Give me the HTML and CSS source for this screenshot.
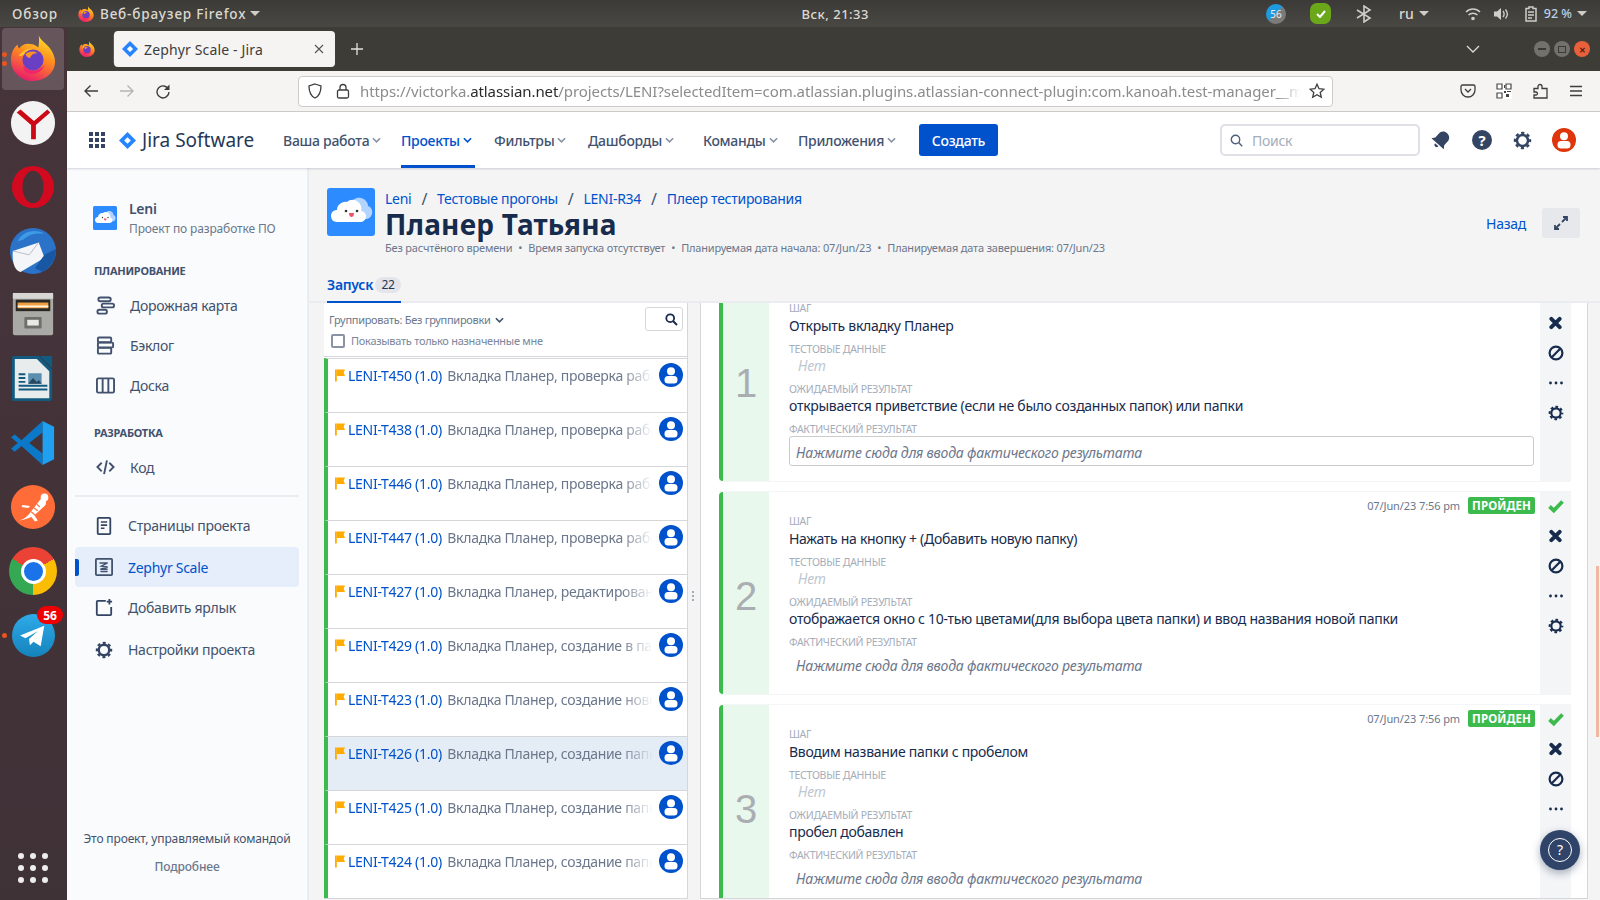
FILE: index.html
```html
<!DOCTYPE html>
<html lang="ru">
<head>
<meta charset="utf-8">
<title>Zephyr Scale - Jira</title>
<link rel="stylesheet" href="styles.css">
</head>
<body>
<svg class="defs" width="0" height="0" aria-hidden="true">
  <defs>
    <linearGradient id="ffgrad" x1="0.7" y1="0" x2="0.3" y2="1"><stop offset="0" stop-color="#ffe226"/><stop offset="0.45" stop-color="#ff8a1f"/><stop offset="1" stop-color="#e8186f"/></linearGradient>
    <linearGradient id="tggrad" x1="0.5" y1="0" x2="0.5" y2="1"><stop offset="0" stop-color="#2eaaea"/><stop offset="1" stop-color="#1583bb"/></linearGradient>
    <symbol id="ff" viewBox="0 0 48 48">
      <path d="M30 0c1 5 7 8 11 13 4 5 6 10 6 15 0 11-10 20-23 20C11 48 1 38 1 26 1 19 4 13 8 10c0 2 .5 3 1.500 4 2-3 6-5 9-5 4 0 8 1 11 4 1-4 1-9 .5-13z" fill="url(#ffgrad)"/>
      <path d="M9 22c3-5 8-8 14-8 -2 2-4 4-5 6-4 1-6 2-9 2z" fill="#ffbf2e"/>
      <circle cx="24" cy="26" r="11" fill="#6a3fc4"/>
      <path d="M16 20c3-3 9-4 13-1 -5 0-7 2-8 5-2 0-4-2-5-4z" fill="#ff9420"/>
      <path d="M14 32c3 4 8 6 13 5 4-1 7-3 9-6-2 8-12 12-19 8-2-1-3-4-3-7z" fill="#f2246e"/>
    </symbol>
    <symbol id="jira" viewBox="0 0 18 18"><polygon points="9,0 18,9 9,18 0,9" fill="#2684ff"/><polygon points="9,5.500 12.500,9 9,12.500 5.500,9" fill="#fff"/></symbol>
    <symbol id="cloud" viewBox="0 0 48 48">
      <rect width="48" height="48" rx="3" fill="#2c8bff"/>
      <path d="M24 16c1-4 5-7 10-6 4 1 7 4 7 8 3 1 5 4 4 8-1 3-3 5-7 5H24z" fill="#b3d4ff"/>
      <path d="M10 34c-4 0-6-3-6-6 0-4 3-6 6-6 0-5 5-9 10-8 3-3 8-3 11 0 3 2 4 6 3 9 3 0 5 3 5 5 0 4-3 6-6 6z" fill="#fff"/>
      <circle cx="19" cy="23" r="1.300" fill="#333"/><circle cx="30" cy="23" r="1.300" fill="#333"/>
      <path d="M22 25h5c0 3-1.500 4-2.500 4s-2.500-1-2.500-4z" fill="#f0506e"/>
    </symbol>
    <symbol id="gear" viewBox="0 0 24 24">
      <circle cx="12" cy="12" r="7" fill="none" stroke="currentColor" stroke-width="3.200"/>
      <circle cx="12" cy="12" r="9.500" fill="none" stroke="currentColor" stroke-width="3" stroke-dasharray="4 3.460" stroke-dashoffset="2"/>
    </symbol>
    <symbol id="person" viewBox="0 0 24 24">
      <circle cx="12" cy="12" r="12" fill="currentColor"/>
      <circle cx="12" cy="8.200" r="4" fill="#fff"/>
      <rect x="5.500" y="13" width="13" height="7.500" rx="3.500" fill="#fff"/>
    </symbol>
    <symbol id="cross" viewBox="0 0 14 14"><path d="M2.500 2.500l9 9m0-9l-9 9" stroke="#172b4d" stroke-width="4.200" stroke-linecap="round" fill="none"/></symbol>
    <symbol id="ban" viewBox="0 0 16 16"><circle cx="8" cy="8" r="6.400" fill="none" stroke="#172b4d" stroke-width="2.200"/><path d="M12.200 3.800l-8.400 8.400" stroke="#172b4d" stroke-width="2.200"/></symbol>
    <symbol id="dots" viewBox="0 0 16 4"><circle cx="2.500" cy="2" r="1.400" fill="#172b4d"/><circle cx="8" cy="2" r="1.400" fill="#172b4d"/><circle cx="13.500" cy="2" r="1.400" fill="#172b4d"/></symbol>
    <symbol id="check" viewBox="0 0 16 14"><path d="M1.500 7.500l4.300 4 8.700-9" stroke="#3dba4e" stroke-width="3.800" fill="none"/></symbol>
    <symbol id="flag" viewBox="0 0 11 13"><path d="M0 0h2v13H0z" fill="#ffab00"/><path d="M2 0h9l-1.500 3.500L11 7H2z" fill="#ffab00"/></symbol>
    <symbol id="chev" viewBox="0 0 10 6"><path d="M1 1l4 4 4-4" stroke="currentColor" stroke-width="1.800" fill="none"/></symbol>
  </defs>
</svg>

<div class="screen">
  <header class="gbar">
    <div class="gbar-left">
      <span class="gbar-overview">Обзор</span>
      <span class="gbar-app"><svg class="i16"><use href="#ff"/></svg>Веб-браузер Firefox<i class="tri"></i></span>
    </div>
    <div class="gbar-clock">Вск, 21:33</div>
    <div class="gbar-right">
      <span class="tray-count">56</span>
      <span class="tray-check"><svg width="10" height="8" viewBox="0 0 10 8"><path d="M1 4l3 3 5-6" stroke="#fff" stroke-width="2" fill="none"/></svg></span>
      <svg class="tray-bt" width="18" height="18" viewBox="0 0 18 18"><path d="M2 5l13 8-6 4V1l6 4L2 13" stroke="#cfcdc8" stroke-width="1.600" fill="none"/></svg>
      <span class="tray-lang">ru<i class="tri"></i></span>
      <svg class="tray-wifi" width="16" height="14" viewBox="0 0 16 14"><path d="M1 5c4-4 10-4 14 0M3.500 8c2.500-2.500 6.500-2.500 9 0" stroke="#cfcdc8" stroke-width="1.500" fill="none"/><circle cx="8" cy="11.500" r="1.800" fill="#cfcdc8"/></svg>
      <svg class="tray-vol" width="16" height="14" viewBox="0 0 16 14"><path d="M0 4.500h3L7 1v12L3 9.500H0z" fill="#cfcdc8"/><path d="M9 4c1.500 2 1.500 4 0 6M11.500 2.500c2.500 3 2.500 6 0 9" stroke="#cfcdc8" stroke-width="1.400" fill="none"/></svg>
      <svg class="tray-bat" width="13" height="16" viewBox="0 0 13 16"><path d="M1 2.500h3V1h4v1.500h3V15H1z" stroke="#cfcdc8" stroke-width="1.500" fill="none"/><path d="M3 6h6M3 9h6M3 12h4" stroke="#cfcdc8" stroke-width="1.300"/></svg>
      <span class="tray-pct">92 %<i class="tri"></i></span>
    </div>
  </header>

  <div class="desk">
    <nav class="dock">
      <div class="dock-slot dock-active"><svg class="dock-icon dock-ff"><use href="#ff"/></svg><i class="pip pip-a"></i><i class="pip pip-b"></i></div>
      <div class="dock-slot"><svg class="dock-icon" viewBox="0 0 48 48"><circle cx="24" cy="24" r="23" fill="#f4f3f3"/><path d="M7 13l15 13v15h5V26l15-13-3-3-14 12-14-12z" fill="#cc0a16"/></svg></div>
      <div class="dock-slot"><svg class="dock-icon" viewBox="0 0 48 48"><ellipse cx="24" cy="24" rx="22" ry="22" fill="#d3091f"/><ellipse cx="24" cy="24" rx="11" ry="17" fill="#46333a"/></svg></div>
      <div class="dock-slot"><svg class="dock-icon" viewBox="0 0 48 48"><circle cx="24" cy="24" r="24" fill="#2a73c9"/><path d="M8 14C12 4 26 0 36 6c-8-1-16 0-22 6z" fill="#3f9be6"/><path d="M3 24l27-9 6 16-25 15C4 44 2 34 3 24z" fill="#f4f5f8"/><path d="M3 24l17 4 10-13" stroke="#b7bcc9" fill="none"/><path d="M36 28l12-6c0 10-5 18-14 24l-8-4z" fill="#1857a4"/></svg></div>
      <div class="dock-slot"><svg class="dock-icon" viewBox="0 0 48 48"><rect x="3" y="1" width="42" height="44" rx="2" fill="#a9a9a5"/><rect x="3" y="1" width="42" height="6" fill="#d7d6d2"/><rect x="6" y="8" width="36" height="12" fill="#2b2925"/><rect x="8" y="11" width="32" height="6" fill="#f0a040"/><rect x="8" y="14" width="32" height="2" fill="#fff2d8"/><rect x="15" y="26" width="18" height="12" rx="1" fill="#6e6e6a"/><rect x="18" y="29" width="12" height="6" fill="#e8e8e4"/></svg></div>
      <div class="dock-slot"><svg class="dock-icon" viewBox="0 0 48 48"><path d="M4 0h26l14 14v30a3 3 0 0 1-3 3H4a2 2 0 0 1-2-2V2a2 2 0 0 1 2-2z" fill="#125a80"/><path d="M5 3h23l13 13v28H5z" fill="#e8ecec"/><path d="M31 0h13v13z" fill="#125a80"/><path d="M9 19h7M9 23h7M9 27h7M9 31h30M9 35h30" stroke="#125a80" stroke-width="2"/><rect x="19" y="18" width="14" height="11" fill="#5a8fb0"/><path d="M19 29l5-6 4 4 2-2 3 4z" fill="#284860"/></svg></div>
      <div class="dock-slot"><svg class="dock-icon" viewBox="0 0 48 48"><path d="M34 1L12 21 5 15 1 18l7 6-7 6 4 3 7-6 22 20V35L20 24 34 13z" fill="#0b78c8"/><path d="M34 1l12 6v34l-12 6z" fill="#1fa0f0"/></svg></div>
      <div class="dock-slot"><svg class="dock-icon" viewBox="0 0 48 48"><circle cx="24" cy="24" r="23" fill="#ff6c37"/><path d="M10 38c4-1 8-4 11-8l10-13c2-2 5-2 6 0s1 4-1 6L26 32c-4 3-9 5-16 6z" fill="#fff"/><path d="M22 29l4 3M25 25l4 3M28 21l3 3" stroke="#ff6c37" stroke-width="1.200"/><path d="M25 32l4 6-3 1-4-5zM19 25l-7-1 1-2 8 1z" fill="#fff"/><circle cx="36" cy="14" r="4" fill="#fff"/></svg></div>
      <div class="dock-slot"><span class="chrome"><span class="chrome-core"></span></span></div>
      <div class="dock-slot"><svg class="dock-icon dock-tg" viewBox="0 0 48 48"><circle cx="24" cy="24" r="24" fill="url(#tggrad)"/><path d="M9 24l27-11-4 23-8-5-4 4-1-7 10-9-14 8z" fill="#fff"/></svg><i class="pip pip-c"></i><span class="dock-badge">56</span></div>
      <div class="dock-apps"><i></i><i></i><i></i><i></i><i></i><i></i><i></i><i></i><i></i></div>
    </nav>

    <div class="win">
      <div class="tabstrip">
        <svg class="i16 strip-ff"><use href="#ff"/></svg>
        <div class="tab"><svg class="tab-ico"><use href="#jira"/></svg><span class="tab-title">Zephyr Scale - Jira</span><svg class="tab-x" width="10" height="10" viewBox="0 0 10 10"><path d="M1 1l8 8m0-8L1 9" stroke="#555" stroke-width="1.100"/></svg></div>
        <svg class="tab-plus" width="14" height="14" viewBox="0 0 14 14"><path d="M7 1v12M1 7h12" stroke="#e4e2df" stroke-width="1.300"/></svg>
        <svg class="tab-list" width="14" height="8" viewBox="0 0 14 8"><path d="M1 1l6 6 6-6" stroke="#dcdad6" stroke-width="1.300" fill="none"/></svg>
        <div class="winbtns"><span class="wb"><i class="wb-min"></i></span><span class="wb"><i class="wb-max"></i></span><span class="wb wb-close">✕</span></div>
      </div>

      <div class="toolbar">
        <svg class="tb-back" width="16" height="14" viewBox="0 0 16 14"><path d="M15 7H2M7.500 1.500L2 7l5.500 5.500" stroke="#3d3d3d" stroke-width="1.400" fill="none"/></svg>
        <svg class="tb-fwd" width="16" height="14" viewBox="0 0 16 14"><path d="M1 7h13M8.500 1.500L14 7l-5.500 5.500" stroke="#b4b4b4" stroke-width="1.400" fill="none"/></svg>
        <svg class="tb-reload" width="16" height="16" viewBox="0 0 16 16"><path d="M13.500 6.500A6 6 0 1 0 14 9" stroke="#3d3d3d" stroke-width="1.400" fill="none"/><path d="M14.500 1.500v5.500H9z" fill="#3d3d3d"/></svg>
        <div class="urlbar">
          <svg class="url-shield" width="16" height="16" viewBox="0 0 16 16"><path d="M8 1l6 2c0 6-1.500 10-6 12C3.500 13 2 9 2 3z" stroke="#3d3d3d" stroke-width="1.300" fill="none"/></svg>
          <svg class="url-lock" width="14" height="16" viewBox="0 0 14 16"><rect x="1.500" y="7" width="11" height="8" rx="1.500" stroke="#3d3d3d" stroke-width="1.300" fill="none"/><path d="M4 7V4.500a3 3 0 0 1 6 0V7" stroke="#3d3d3d" stroke-width="1.300" fill="none"/></svg>
          <span class="url-text">https://victorka.<b>atlassian.net</b>/projects/LENI?selectedItem=com.atlassian.plugins.atlassian-connect-plugin:com.kanoah.test-manager__manager</span>
          <svg class="url-star" width="16" height="16" viewBox="0 0 16 16"><path d="M8 1.200l2 4.500 4.900.5-3.700 3.300 1.100 4.800L8 11.800l-4.300 2.500 1.100-4.800L1.100 6.200 6 5.700z" stroke="#3d3d3d" stroke-width="1.300" fill="none"/></svg>
        </div>
        <svg class="tb-pocket" width="16" height="14" viewBox="0 0 16 14"><path d="M1 2.500A1.500 1.500 0 0 1 2.500 1h11A1.500 1.500 0 0 1 15 2.500V6A7 7 0 0 1 1 6z" stroke="#3d3d3d" stroke-width="1.300" fill="none"/><path d="M5 5l3 3 3-3" stroke="#3d3d3d" stroke-width="1.300" fill="none"/></svg>
        <svg class="tb-qr" width="16" height="16" viewBox="0 0 16 16"><rect width="16" height="16" fill="#fff"/><path d="M1 1h5v5H1zM10 1h5v5h-5zM1 10h5v5H1z" stroke="#444" stroke-width="1.200" fill="none"/><path d="M8 2h1v3H8zM8 8h2v2H8zM11 8h4v1h-4zM10 11h3v3h-3z" fill="#444"/></svg>
        <svg class="tb-puzzle" width="16" height="16" viewBox="0 0 16 16"><path d="M1 5h4V3a2 2 0 0 1 4 0v2h5v9.500H1v-3h2a1.500 1.500 0 0 0 0-3H1z" transform="translate(0 .5)" stroke="#3d3d3d" stroke-width="1.300" fill="none"/></svg>
        <svg class="tb-menu" width="14" height="12" viewBox="0 0 14 12"><path d="M1 1.500h12M1 6h12M1 10.500h12" stroke="#3d3d3d" stroke-width="1.300"/></svg>
      </div>

      <div class="app">
        <div class="jnav">
          <svg class="jnav-grid" width="16" height="16" viewBox="0 0 16 16"><g fill="#344563"><rect width="4" height="4"/><rect x="6" width="4" height="4"/><rect x="12" width="4" height="4"/><rect y="6" width="4" height="4"/><rect x="6" y="6" width="4" height="4"/><rect x="12" y="6" width="4" height="4"/><rect y="12" width="4" height="4"/><rect x="6" y="12" width="4" height="4"/><rect x="12" y="12" width="4" height="4"/></g></svg>
          <div class="jlogo"><svg class="jlogo-ico"><use href="#jira"/></svg><span class="jlogo-text">Jira Software</span></div>
          <div class="jmenu">
            <span class="jm jm-1">Ваша работа<svg class="chev"><use href="#chev"/></svg></span>
            <span class="jm jm-2 jm-on">Проекты<svg class="chev"><use href="#chev"/></svg></span>
            <span class="jm jm-3">Фильтры<svg class="chev"><use href="#chev"/></svg></span>
            <span class="jm jm-4">Дашборды<svg class="chev"><use href="#chev"/></svg></span>
            <span class="jm jm-5">Команды<svg class="chev"><use href="#chev"/></svg></span>
            <span class="jm jm-6">Приложения<svg class="chev"><use href="#chev"/></svg></span>
          </div>
          <button class="jcreate">Создать</button>
          <div class="jsearch"><svg width="13" height="13" viewBox="0 0 13 13"><circle cx="5.500" cy="5.500" r="4.200" stroke="#505f79" stroke-width="1.400" fill="none"/><path d="M8.600 8.600l3.600 3.600" stroke="#505f79" stroke-width="1.400"/></svg><span>Поиск</span></div>
          <svg class="jbell" width="22" height="22" viewBox="0 0 24 24"><g transform="rotate(42 12 12)"><path d="M12 2c-3.800 0-6.500 2.700-6.500 6.500V14l-2.500 3.500h18L18.500 14V8.500C18.500 4.700 15.800 2 12 2z" fill="#344563"/><path d="M9.500 19h5a2.500 2.500 0 0 1-5 0z" fill="#344563"/></g></svg>
          <span class="jhelp">?</span>
          <svg class="jgear"><use href="#gear"/></svg>
          <svg class="javatar"><use href="#person"/></svg>
        </div>

        <div class="jbody">
          <aside class="side">
            <div class="side-proj">
              <svg class="side-logo"><use href="#cloud"/></svg>
              <div><div class="side-name">Leni</div><div class="side-sub">Проект по разработке ПО</div></div>
            </div>
            <div class="side-h side-h-1">ПЛАНИРОВАНИЕ</div>
            <div class="side-i side-i-a"><svg class="sico" viewBox="0 0 20 20"><g fill="none" stroke="#42526e" stroke-width="2"><rect x="2.500" y="1.500" width="13" height="4" rx="2"/><rect x="6" y="8" width="13" height="4" rx="2"/><rect x="1.500" y="14.500" width="10" height="4" rx="2"/></g></svg><span>Дорожная карта</span></div>
            <div class="side-i side-i-a"><svg class="sico" viewBox="0 0 20 20"><g fill="none" stroke="#42526e" stroke-width="2"><rect x="2" y="1.500" width="14" height="5" rx="1"/><rect x="2" y="7" width="16" height="5" rx="1"/><rect x="2" y="12.500" width="14" height="6" rx="1"/></g></svg><span>Бэклог</span></div>
            <div class="side-i side-i-a"><svg class="sico" viewBox="0 0 20 20"><g fill="none" stroke="#42526e" stroke-width="2"><rect x="1" y="2.500" width="18" height="15" rx="1.500"/><path d="M7 2.500v15M13 2.500v15"/></g></svg><span>Доска</span></div>
            <div class="side-h side-h-2">РАЗРАБОТКА</div>
            <div class="side-i side-i-a"><svg class="sico" viewBox="0 0 20 20"><path d="M6 5L1.500 9.500 6 14M14 5l4.500 4.500L14 14M11.500 2.500L8.500 17" fill="none" stroke="#42526e" stroke-width="2"/></svg><span>Код</span></div>
            <div class="side-div"></div>
            <div class="side-i side-i-b"><svg class="sico" viewBox="0 0 20 20"><path d="M4 1h12a1 1 0 0 1 1 1v16a1 1 0 0 1-1 1H4a1 1 0 0 1-1-1V2a1 1 0 0 1 1-1z" fill="none" stroke="#344563" stroke-width="2"/><path d="M6.500 5.500h7M6.500 9h7M6.500 12.500h4" stroke="#344563" stroke-width="1.800"/></svg><span>Страницы проекта</span></div>
            <div class="side-i side-i-b side-on"><svg class="sico" viewBox="0 0 20 20"><rect x="1" y="1" width="18" height="18" rx="1" fill="none" stroke="#42526e" stroke-width="2"/><path d="M5 5.500h9L7 9l7 1-8 2.500h8M6 15h8" fill="none" stroke="#42526e" stroke-width="1.500"/></svg><span>Zephyr Scale</span></div>
            <div class="side-i side-i-b"><svg class="sico" viewBox="0 0 20 20"><path d="M12 2H3a1 1 0 0 0-1 1v14a1 1 0 0 0 1 1h14a1 1 0 0 0 1-1v-8" fill="none" stroke="#344563" stroke-width="2"/><path d="M16 0v6M13 3h6" stroke="#344563" stroke-width="2"/></svg><span>Добавить ярлык</span></div>
            <div class="side-i side-i-b side-gear"><svg class="sico"><use href="#gear"/></svg><span>Настройки проекта</span></div>
            <div class="side-foot"><div>Это проект, управляемый командой</div><div class="side-more">Подробнее</div></div>
          </aside>

          <main class="main">
            <section class="head">
              <div class="head-top">
                <svg class="head-logo"><use href="#cloud"/></svg>
                <div class="head-txt">
                  <div class="crumbs"><a>Leni</a><i>/</i><a>Тестовые прогоны</a><i>/</i><a>LENI-R34</a><i>/</i><a>Плеер тестирования</a></div>
                  <h1 class="title">Планер Татьяна</h1>
                  <div class="meta"><span>Без расчтёного времени</span><b>•</b><span>Время запуска отсутствует</span><b>•</b><span>Планируемая дата начала: 07/Jun/23</span><b>•</b><span>Планируемая дата завершения: 07/Jun/23</span></div>
                </div>
                <a class="back">Назад</a>
                <span class="expand"><svg width="14" height="14" viewBox="0 0 14 14"><path d="M8 6l5-5M9 1h4v4M6 8l-5 5M1 9v4h4" fill="none" stroke="#344563" stroke-width="1.800"/></svg></span>
              </div>
              <div class="tabs"><span class="tabs-on">Запуск<em>22</em></span></div>
            </section>

            <section class="split">
              <div class="list">
                <div class="list-head">
                  <div class="lh-row">
                    <span class="lh-group">Группировать: Без группировки<svg class="chev chev-g"><use href="#chev"/></svg></span>
                    <span class="lh-search"><svg width="13" height="13" viewBox="0 0 13 13"><circle cx="5.200" cy="5.200" r="3.900" stroke="#172b4d" stroke-width="1.800" fill="none"/><path d="M8 8l4 4" stroke="#172b4d" stroke-width="2"/></svg></span>
                  </div>
                  <label class="lh-check"><i></i>Показывать только назначенные мне</label>
                </div>
                <div class="row"><svg class="row-flag"><use href="#flag"/></svg><div class="row-t"><a>LENI-T450 (1.0)</a> Вкладка Планер, проверка работы папок</div><svg class="row-av"><use href="#person"/></svg></div>
                <div class="row"><svg class="row-flag"><use href="#flag"/></svg><div class="row-t"><a>LENI-T438 (1.0)</a> Вкладка Планер, проверка работы папок</div><svg class="row-av"><use href="#person"/></svg></div>
                <div class="row"><svg class="row-flag"><use href="#flag"/></svg><div class="row-t"><a>LENI-T446 (1.0)</a> Вкладка Планер, проверка работы папок</div><svg class="row-av"><use href="#person"/></svg></div>
                <div class="row"><svg class="row-flag"><use href="#flag"/></svg><div class="row-t"><a>LENI-T447 (1.0)</a> Вкладка Планер, проверка работы папок</div><svg class="row-av"><use href="#person"/></svg></div>
                <div class="row"><svg class="row-flag"><use href="#flag"/></svg><div class="row-t"><a>LENI-T427 (1.0)</a> Вкладка Планер, редактирование папки</div><svg class="row-av"><use href="#person"/></svg></div>
                <div class="row"><svg class="row-flag"><use href="#flag"/></svg><div class="row-t"><a>LENI-T429 (1.0)</a> Вкладка Планер, создание в папке теста</div><svg class="row-av"><use href="#person"/></svg></div>
                <div class="row"><svg class="row-flag"><use href="#flag"/></svg><div class="row-t"><a>LENI-T423 (1.0)</a> Вкладка Планер, создание новой папки</div><svg class="row-av"><use href="#person"/></svg></div>
                <div class="row row-on"><svg class="row-flag"><use href="#flag"/></svg><div class="row-t"><a>LENI-T426 (1.0)</a> Вкладка Планер, создание папки</div><svg class="row-av"><use href="#person"/></svg></div>
                <div class="row"><svg class="row-flag"><use href="#flag"/></svg><div class="row-t"><a>LENI-T425 (1.0)</a> Вкладка Планер, создание папки</div><svg class="row-av"><use href="#person"/></svg></div>
                <div class="row"><svg class="row-flag"><use href="#flag"/></svg><div class="row-t"><a>LENI-T424 (1.0)</a> Вкладка Планер, создание папки</div><svg class="row-av"><use href="#person"/></svg></div>
              </div>

              <div class="handle"><i></i><i></i><i></i></div>

              <div class="player">
                <div class="steps">
                  <article class="step">
                    <div class="step-n">1</div>
                    <div class="step-c">
                      <div class="step-m"></div>
                      <div class="lbl lbl-1">Шаг</div>
                      <div class="val">Открыть вкладку Планер</div>
                      <div class="lbl">Тестовые данные</div>
                      <div class="none">Нет</div>
                      <div class="lbl">Ожидаемый результат</div>
                      <div class="val">открывается приветствие (если не было созданных папок) или папки</div>
                      <div class="lbl">Фактический результат</div>
                      <div class="act act-box">Нажмите сюда для ввода фактического результата</div>
                    </div>
                    <div class="step-a"><span class="ia"></span><svg class="ia-x"><use href="#cross"/></svg><svg class="ia-b"><use href="#ban"/></svg><svg class="ia-d"><use href="#dots"/></svg><svg class="ia-g"><use href="#gear"/></svg></div>
                  </article>
                  <article class="step">
                    <div class="step-n">2</div>
                    <div class="step-c">
                      <div class="step-m"><span class="date">07/Jun/23 7:56 pm</span><span class="pass">ПРОЙДЕН</span></div>
                      <div class="lbl lbl-1">Шаг</div>
                      <div class="val">Нажать на кнопку + (Добавить новую папку)</div>
                      <div class="lbl">Тестовые данные</div>
                      <div class="none">Нет</div>
                      <div class="lbl">Ожидаемый результат</div>
                      <div class="val">отображается окно с 10-тью цветами(для выбора цвета папки) и ввод названия новой папки</div>
                      <div class="lbl">Фактический результат</div>
                      <div class="act">Нажмите сюда для ввода фактического результата</div>
                    </div>
                    <div class="step-a"><svg class="ia-c"><use href="#check"/></svg><svg class="ia-x"><use href="#cross"/></svg><svg class="ia-b"><use href="#ban"/></svg><svg class="ia-d"><use href="#dots"/></svg><svg class="ia-g"><use href="#gear"/></svg></div>
                  </article>
                  <article class="step">
                    <div class="step-n">3</div>
                    <div class="step-c">
                      <div class="step-m"><span class="date">07/Jun/23 7:56 pm</span><span class="pass">ПРОЙДЕН</span></div>
                      <div class="lbl lbl-1">Шаг</div>
                      <div class="val">Вводим название папки с пробелом</div>
                      <div class="lbl">Тестовые данные</div>
                      <div class="none">Нет</div>
                      <div class="lbl">Ожидаемый результат</div>
                      <div class="val">пробел добавлен</div>
                      <div class="lbl">Фактический результат</div>
                      <div class="act">Нажмите сюда для ввода фактического результата</div>
                    </div>
                    <div class="step-a"><svg class="ia-c"><use href="#check"/></svg><svg class="ia-x"><use href="#cross"/></svg><svg class="ia-b"><use href="#ban"/></svg><svg class="ia-d"><use href="#dots"/></svg><svg class="ia-g"><use href="#gear"/></svg></div>
                  </article>
                </div>
              </div>
              <div class="gutter"><i></i></div>
            </section>
            <button class="fab"><span>?</span></button>
          </main>
        </div>
      </div>
    </div>
  </div>
</div>
</body>
</html>
```
FILE: styles.css
```css
* { box-sizing: border-box; }
html, body { margin: 0; height: 100%; overflow: hidden; }
body { font-family: "Noto Sans", "Open Sans", sans-serif; font-size: 14px; color: #172b4d; }
.defs { position: absolute; }
svg { display: block; flex: none; }
.i16 { width: 16px; height: 16px; }

.screen { width: 1600px; height: 900px; display: flex; flex-direction: column; }

/* top bar */
.gbar { height: 27px; flex: none; display: grid; grid-template-columns: 1fr auto 731px; align-items: center; background: linear-gradient(#3b3a36, #4a4843); color: #dcd9d2; font-size: 13.5px; font-weight: 500; }
.gbar-left { display: flex; align-items: center; padding-left: 12px; letter-spacing: .85px; }
.gbar-overview { width: 66px; }
.gbar-app { display: flex; align-items: center; gap: 6px; }
.tri { display: inline-block; width: 0; height: 0; border-left: 5px solid transparent; border-right: 5px solid transparent; border-top: 5px solid #cfcdc8; margin-left: 5px; }
.gbar-app .tri { margin-left: -2px; }
.gbar-clock { text-align: center; font-size: 13px; letter-spacing: .5px; }
.gbar-right { display: flex; align-items: center; justify-content: flex-end; padding-right: 13px; }
.tray-count { width: 20px; height: 20px; border-radius: 50%; background: linear-gradient(135deg, #1e9ae0 50%, #7a7a7a 50%); color: #eee; font-size: 10px; font-weight: 400; display: flex; align-items: center; justify-content: center; margin-right: 24px; }
.tray-check { width: 21px; height: 21px; border-radius: 7px; background: #6aa81a; display: flex; align-items: center; justify-content: center; margin-right: 24px; }
.tray-bt { margin-right: 26px; }
.tray-lang { display: flex; align-items: center; font-size: 14px; margin-right: 36px; }
.tray-wifi { margin-right: 13px; }
.tray-vol { margin-right: 15px; }
.tray-bat { margin-right: 6px; }
.tray-pct { display: flex; align-items: center; font-size: 12.5px; color: #b9d0e8; }

.desk { flex: 1; display: flex; min-height: 0; }

/* dock */
.dock { width: 67px; flex: none; background: linear-gradient(#47343b, #3f3237); display: flex; flex-direction: column; padding-top: 1px; padding-left: 2px; }
.dock-slot { width: 62px; height: 64px; display: flex; align-items: center; justify-content: center; position: relative; }
.dock-active { background: rgba(255,255,255,.17); border-radius: 4px; height: 62px; margin-bottom: 1px; }
.dock-icon { width: 46px; height: 46px; }
.dock-ff { margin-top: -2px; }
.dock-tg { width: 43px; height: 43px; }
.pip { position: absolute; width: 5px; height: 5px; border-radius: 50%; background: #e95420; left: 0; }
.pip-a { top: 24px; } .pip-b { top: 33px; } .pip-c { top: 30px; }
.dock-badge { position: absolute; top: 3px; right: 1px; min-width: 26px; height: 18px; border-radius: 9px; background: #ef0000; color: #fff; font-size: 12px; font-weight: 700; display: flex; align-items: center; justify-content: center; }
.chrome { width: 48px; height: 48px; border-radius: 50%; background: conic-gradient(from -60deg, #ea4335 0 120deg, #fbbc04 120deg 240deg, #34a853 240deg 360deg); display: flex; align-items: center; justify-content: center; }
.chrome-core { width: 25px; height: 25px; border-radius: 50%; background: #1a73e8; border: 3px solid #fff; }
.dock-apps { margin-top: auto; margin-bottom: 17px; margin-left: 16px; display: grid; grid-template-columns: repeat(3, 6px); gap: 6px; }
.dock-apps i { width: 6px; height: 6px; border-radius: 50%; background: #eee; }

/* window */
.win { flex: 1; display: flex; flex-direction: column; min-width: 0; }
.tabstrip { height: 44px; flex: none; background: #3e3c37; display: flex; align-items: center; color: #fff; }
.strip-ff { margin-left: 12px; }
.tab { width: 221px; height: 36px; margin-left: 19px; background: #f5f4f3; border-radius: 4px; display: flex; align-items: center; padding-left: 8px; box-shadow: -5px 0 0 -4px #5c5a55; }
.tab-ico { width: 16px; height: 16px; }
.tab-title { margin-left: 6px; font-size: 14px; letter-spacing: .15px; color: #3d3d3d; flex: 1; }
.tab-x { margin-right: 11px; }
.tab-plus { margin-left: 15px; }
.tab-list { margin-left: 1102px; }
.winbtns { display: flex; gap: 4px; margin-left: 54px; }
.wb { width: 16px; height: 16px; border-radius: 50%; background: #73716c; display: flex; align-items: center; justify-content: center; }
.wb-min { width: 8px; height: 1.500px; background: #3a3935; }
.wb-max { width: 8px; height: 7px; border: 1.200px solid #3a3935; }
.wb-close { background: #e9603a; color: #4a2012; font-size: 8px; font-weight: 700; }

.toolbar { height: 41px; flex: none; background: #f5f4f3; border-bottom: 1px solid #cfcdca; display: flex; align-items: center; }
.tb-back { margin-left: 16px; }
.tb-fwd { margin-left: 20px; }
.tb-reload { margin-left: 20px; }
.urlbar { width: 1035px; height: 31px; margin-left: 127px; background: #fff; border: 1px solid #cdcbc8; border-radius: 4px; display: flex; align-items: center; padding-left: 8px; padding-right: 7px; }
.url-lock { margin-left: 13px; }
.url-text { flex: 1; margin-left: 10px; margin-right: 8px; overflow: hidden; white-space: nowrap; font-size: 15px; letter-spacing: -.08px; color: #8c8c8c; -webkit-mask-image: linear-gradient(to right, #000 calc(100% - 24px), transparent); mask-image: linear-gradient(to right, #000 calc(100% - 24px), transparent); }
.url-text b { font-weight: 400; color: #2b2b2b; }
.tb-pocket { margin-left: 127px; }
.tb-qr { margin-left: 20px; }
.tb-puzzle { margin-left: 21px; }
.tb-menu { margin-left: 20px; }

.app { flex: 1; display: flex; flex-direction: column; min-height: 0; letter-spacing: -.02em; }

/* jira nav */
.jnav { height: 56px; flex: none; background: #fff; display: flex; align-items: center; box-shadow: 0 1px 2px rgba(9,30,66,.18); position: relative; z-index: 2; }
.jnav-grid { margin-left: 22px; }
.jlogo { display: flex; align-items: center; margin-left: 14px; width: 164px; }
.jlogo-ico { width: 17px; height: 17px; }
.jlogo-text { margin-left: 6px; font-size: 19px; color: #253858; font-weight: 400; letter-spacing: 0; }
.jmenu { display: flex; align-self: stretch; }
.jm { display: flex; align-items: center; font-size: 14px; font-weight: 500; color: #42526e; border-bottom: 3px solid transparent; padding-top: 3px; }
.jm-1 { width: 118px; } .jm-2 { width: 93px; } .jm-3 { width: 94px; } .jm-4 { width: 115px; } .jm-5 { width: 95px; } .jm-6 { width: 121px; }
.jm-on { color: #0052cc; position: relative; }
.jm-on::after { content: ""; position: absolute; left: 0; width: 74px; bottom: -3px; height: 3px; background: #0052cc; }
.chev { width: 9px; height: 6px; margin-left: 3px; color: #8993a4; }
.jm-on .chev { color: #0052cc; }
.jcreate { width: 79px; height: 32px; background: #0052cc; color: #fff; border: 0; border-radius: 3px; font: 500 14px "Noto Sans", sans-serif; letter-spacing: -.02em; }
.jsearch { margin-left: 222px; width: 200px; height: 32px; border: 2px solid #dfe1e6; border-radius: 5px; display: flex; align-items: center; padding-left: 8px; color: #a5adba; font-size: 14px; gap: 9px; }
.jbell { margin-left: 10px; }
.jhelp { margin-left: 20px; width: 20px; height: 20px; border-radius: 50%; background: #344563; color: #fff; font-weight: 700; font-size: 15px; line-height: 20px; text-align: center; }
.jgear { margin-left: 21px; width: 19px; height: 19px; color: #344563; }
.javatar { margin-left: 20px; width: 24px; height: 24px; color: #de350b; }

.jbody { flex: 1; display: flex; min-height: 0; }

/* sidebar */
.side { width: 242px; flex: none; background: #fafbfc; border-right: 2px solid #ebecf0; padding: 0 8px; display: flex; flex-direction: column; color: #42526e; }
.side-proj { display: flex; align-items: flex-start; gap: 12px; padding: 32px 0 0 18px; height: 85px; }
.side-logo { width: 24px; height: 24px; margin-top: 6px; }
.side-name { font-size: 14px; font-weight: 600; line-height: 18px; color: #42526e; }
.side-sub { font-size: 12px; line-height: 22px; color: #6b778c; letter-spacing: -.14px; }
.side-h { font-size: 11px; font-weight: 700; color: #42526e; padding-left: 19px; line-height: 16px; }
.side-h-1 { margin-top: 10px; }
.side-h-2 { margin-top: 20px; }
.side-i { display: flex; align-items: center; height: 40px; font-size: 14px; }
.side-i-a { padding-left: 21px; gap: 15px; }
.side-i-a .sico { width: 19px; height: 19px; }
.side-h-1 + .side-i { margin-top: 6px; }
.side-h-2 + .side-i { margin-top: 6px; }
.side-i-b { padding-left: 20px; gap: 15px; height: 41px; }
.side-i-b .sico { width: 18px; height: 20px; color: #344563; }
.side-i-b.side-on { background: #e5eefa; color: #0052cc; border-radius: 4px; position: relative; height: 40px; margin-top: 1px; }
.side-on::before { content: ""; position: absolute; left: 0; top: 12px; width: 4px; height: 17px; background: #0052cc; border-radius: 0 2px 2px 0; }
.side-gear { margin-top: 1px; }
.side-div { height: 2px; background: #ebecf0; margin: 8px 0 8px; }
.side-foot { margin-top: auto; text-align: center; font-size: 12px; color: #42526e; padding-bottom: 24px; line-height: 18px; letter-spacing: -.14px; }
.side-more { margin-top: 10px; color: #6b778c; font-weight: 500; }

/* main */
.main { flex: 1; background: #f4f4f5; display: flex; flex-direction: column; min-width: 0; position: relative; }
.head { height: 135px; flex: none; display: flex; flex-direction: column; justify-content: space-between; }
.head-top { display: flex; padding: 20px 20px 0 18px; }
.head-logo { width: 48px; height: 48px; }
.head-txt { margin-left: 10px; flex: 1; }
.crumbs { display: flex; align-items: center; font-size: 14px; line-height: 22px; }
.crumbs a { color: #0052cc; }
.crumbs i { color: #42526e; font-style: normal; margin: 0 10px; font-size: 16px; line-height: 16px; }
.title { margin: 0; font-size: 28px; font-weight: 700; line-height: 28px; letter-spacing: .2px; color: #172b4d; }
.meta { display: flex; font-size: 11px; line-height: 16px; color: #6b778c; margin-top: 2px; letter-spacing: -.18px; }
.meta b { font-weight: 400; margin: 0 6px; }
.back { color: #0052cc; font-size: 14px; margin-top: 26px; margin-right: 16px; }
.expand { width: 38px; height: 30px; margin-top: 20px; background: #e6e8ec; border-radius: 3px; display: flex; align-items: center; justify-content: center; }
.tabs { padding-left: 18px; border-bottom: 2px solid #ebecf0; height: 34px; display: flex; }
.tabs-on { display: flex; align-items: center; height: 34px; width: 74px; padding-bottom: 1px; border-bottom: 2px solid #0052cc; font-weight: 600; color: #0052cc; font-size: 14px; }
.tabs-on em { font-style: normal; font-weight: 400; font-size: 12px; color: #253858; background: #e3e5ea; border-radius: 8px; margin-left: auto; width: 26px; text-align: center; line-height: 16px; }

.split { flex: 1; display: flex; min-height: 0; padding-left: 15px; padding-bottom: 1px; }
.list { width: 364px; flex: none; background: #fff; border-right: 1px solid #d5d6d9; border-bottom: 1px solid #d5d6d9; overflow: hidden; }
.list-head { height: 54px; border-bottom: 1px solid #d5d6d9; padding: 4px 4px 0 5px; }
.lh-row { display: flex; justify-content: space-between; align-items: flex-start; }
.lh-group { display: flex; align-items: center; font-size: 11px; color: #6b778c; line-height: 16px; margin-top: 5px; }
.chev-g { margin-left: 4px; color: #42526e; }
.lh-search { width: 38px; height: 24px; border: 1px solid #d5d6d9; border-radius: 3px; display: flex; align-items: center; justify-content: flex-end; padding-right: 4px; }
.lh-check { display: flex; align-items: center; font-size: 11px; color: #7a869a; margin: 3px 0 0 2px; line-height: 14px; }
.lh-check i { width: 14px; height: 14px; border: 2px solid #8993a4; border-radius: 2px; margin-right: 6px; }
.row { height: 54px; border-bottom: 1px solid #d5d6d9; border-left: 4px solid #3dba4e; display: flex; align-items: flex-start; padding: 4px 4px 0 7px; }
.list-head + .row { margin-top: 1px; border-top: 1px solid #d5d6d9; height: 55px; }
.row-on { background: #e4ecf5; }
.row-flag { width: 10px; height: 13px; margin-top: 6px; }
.row-t { flex: 1; min-width: 0; margin: 3px 6px 0 3px; line-height: 20px; font-size: 14px; color: #6b778c; white-space: nowrap; overflow: hidden; -webkit-mask-image: linear-gradient(to right, #000 calc(100% - 32px), transparent); mask-image: linear-gradient(to right, #000 calc(100% - 32px), transparent); }
.row-t a { color: #0052cc; margin-right: 2px; }
.row-av { width: 24px; height: 24px; color: #0052cc; }

.handle { width: 12px; flex: none; display: flex; flex-direction: column; align-items: center; justify-content: center; gap: 2px; padding: 0 3px 10px 0; }
.handle i { width: 2px; height: 2px; background: #8993a4; border-radius: 50%; }

.player { flex: 1; min-width: 0; background: #fff; border-left: 1px solid #d5d6d9; border-right: 1px solid #d5d6d9; border-bottom: 1px solid #d5d6d9; overflow: hidden; padding: 0 16px 0 18px; }
.steps { margin-top: -25px; display: flex; flex-direction: column; gap: 9px; }
.step { height: 204px; flex: none; display: flex; background: #fff; border-bottom: 1px solid #f4f5f7; border-top: 1px solid #f4f5f7; }
.step-n { width: 50px; flex: none; background: #e9f8ec; border-left: 4px solid #3dba4e; border-radius: 4px 0 0 4px; display: flex; align-items: center; justify-content: center; font-family: "Liberation Sans", sans-serif; font-size: 40px; color: #aaaeb3; padding-top: 6px; letter-spacing: 0; }
.step-c { flex: 1; min-width: 0; padding: 0 6px 0 20px; margin-top: -1px; }
.step-m { height: 23px; padding-top: 6px; display: flex; justify-content: flex-end; align-items: flex-start; margin-right: -1px; }
.date { font-size: 11px; line-height: 17px; color: #6b778c; margin-right: 8px; letter-spacing: -.1px; }
.pass { height: 17px; width: 67px; background: #3dba4e; border-radius: 2px; color: #fff; font-size: 11.5px; font-weight: 700; line-height: 17px; text-align: center; letter-spacing: .1px; }
.lbl { font-size: 10.5px; line-height: 14px; height: 14px; color: #a5adba; text-transform: uppercase; margin-top: 6px; }
.lbl-1 { margin-top: 0; }
.val { font-size: 14px; line-height: 20px; color: #172b4d; white-space: nowrap; }
.lbl-1 + .val { margin-top: 1px; }
.none { font-size: 14px; line-height: 20px; font-style: italic; color: #c1c7d0; padding-left: 9px; }
.act { height: 30px; line-height: 31px; font-style: italic; font-size: 14px; letter-spacing: -.2px; color: #6b778c; padding-left: 6px; border: 1px solid transparent; border-radius: 3px; }
.act-box { border-color: #ccc; }
.step-a { width: 31px; flex: none; background: #f4f5f7; display: flex; flex-direction: column; align-items: center; padding-top: 6px; margin-top: -1px; }
.step-a svg, .ia { width: 16px; height: 18px; flex: none; margin-bottom: 12px; }
.step-a .ia-x { width: 13px; }
.ia-g { color: #172b4d; }

.gutter { width: 12px; flex: none; display: flex; justify-content: flex-end; padding-right: 1px; }
.gutter i { display: block; width: 3px; height: 171px; background: #f0b8a0; margin-top: 263px; }

.fab { position: absolute; left: 1231px; top: 662px; width: 40px; height: 40px; border-radius: 50%; background: #2f4468; border: 0; padding: 0; display: flex; align-items: center; justify-content: center; box-shadow: 0 3px 8px rgba(9,30,66,.35); z-index: 3; }
.fab span { width: 24px; height: 24px; border: 1.500px solid #fff; border-radius: 50%; color: #fff; font: 400 14px/21px "Noto Sans", sans-serif; text-align: center; }
```
